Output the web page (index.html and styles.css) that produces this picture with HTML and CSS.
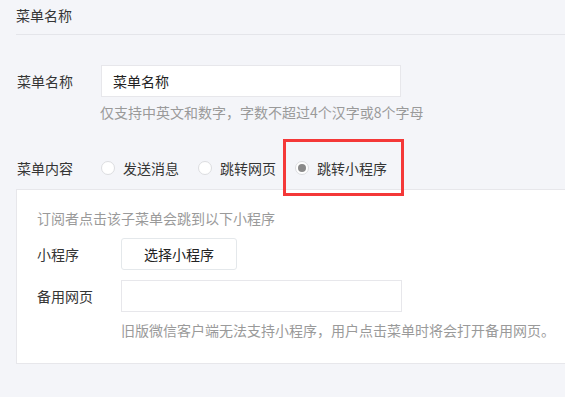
FILE: index.html
```html
<!DOCTYPE html>
<html lang="zh-CN">
<head>
    <meta charset="UTF-8">
    <meta name="viewport" content="width=device-width, initial-scale=1.0">
    <title>菜单设置</title>
    <link rel="stylesheet" href="styles.css">
</head>
<body>
    <div class="page">
        <div class="page-title">菜单名称</div>

        <div class="form-row name-row">
            <label class="form-label">菜单名称</label>
            <div class="form-field">
                <input class="text-input name-input" type="text" value="菜单名称">
            </div>
        </div>
        <div class="form-tip name-tip">仅支持中英文和数字，字数不超过4个汉字或8个字母</div>

        <div class="form-row content-row">
            <label class="form-label">菜单内容</label>
            <div class="radio-group">
                <span class="radio-item"><i class="radio"></i>发送消息</span>
                <span class="radio-item"><i class="radio"></i>跳转网页</span>
                <span class="radio-item marked"><i class="radio checked"></i>跳转小程序</span>
            </div>
        </div>

        <div class="panel">
            <div class="panel-desc">订阅者点击该子菜单会跳到以下小程序</div>
            <div class="form-row panel-row">
                <label class="form-label panel-label">小程序</label>
                <button class="btn">选择小程序</button>
            </div>
            <div class="form-row panel-row">
                <label class="form-label panel-label">备用网页</label>
                <input class="text-input url-input" type="text">
            </div>
            <div class="form-tip panel-tip">旧版微信客户端无法支持小程序，用户点击菜单时将会打开备用网页。</div>
        </div>
    </div>
</body>
</html>
```

FILE: styles.css
```css
body {
    margin: 0;
    padding: 0;
    background-color: #f4f5f9;
    color: #353535;
    font-family: "Noto Sans CJK SC", "Noto Sans", sans-serif;
    font-size: 14px;
    overflow: hidden;
}
.page {
    padding-left: 16px;
}
.page-title {
    height: 35px;
    line-height: 30px;
    border-bottom: 1px solid #e4e5ea;
    box-sizing: border-box;
}
.form-row {
    display: flex;
    align-items: center;
    height: 32px;
}
.form-label {
    width: 84px;
    flex-shrink: 0;
    padding-left: 1px;
}
.name-row {
    margin-top: 30px;
}
.text-input {
    box-sizing: border-box;
    height: 32px;
    border: 1px solid #e7e7eb;
    background: #fff;
    font-family: inherit;
    font-size: 14px;
    color: #222;
    padding: 0 11px;
    margin: 0;
    outline: none;
}
.name-input {
    width: 300px;
}
.form-tip {
    color: #9a9a9a;
    line-height: 20px;
    white-space: nowrap;
}
.name-tip {
    margin-top: 5px;
    padding-left: 84px;
}
.content-row {
    margin-top: 30px;
}
.radio-group {
    display: flex;
    align-items: center;
}
.radio-item {
    display: flex;
    align-items: center;
    margin-right: 19px;
    position: relative;
}
.radio {
    display: inline-block;
    box-sizing: border-box;
    width: 14px;
    height: 14px;
    border: 1px solid #dcdde0;
    border-radius: 50%;
    background: #fff;
    margin-right: 8px;
    position: relative;
}
.radio.checked::after {
    content: "";
    position: absolute;
    left: 2px;
    top: 2px;
    width: 8px;
    height: 8px;
    border-radius: 50%;
    background: #8a8a8a;
}
/* red annotation box over the selected option */
.marked::before {
    content: "";
    position: absolute;
    left: -12px;
    right: -17px;
    top: -19px;
    bottom: -18px;
    border: 3px solid #f43838;
}
.panel {
    margin-top: 5px;
    margin-right: -10px;
    background: #fff;
    border: 1px solid #e7e7eb;
    padding: 18px 20px 23px 20px;
}
.panel-desc {
    color: #9a9a9a;
    line-height: 20px;
}
.panel-row {
    margin-top: 10px;
}
.panel-label {
    width: 84px;
    padding-left: 0;
}
.btn {
    width: 116px;
    height: 32px;
    background: #fff;
    border: 1px solid #e4e8eb;
    border-radius: 3px;
    font-family: inherit;
    font-size: 14px;
    color: #222;
    padding: 0;
    cursor: pointer;
}
.url-input {
    width: 281px;
}
.panel-tip {
    margin-top: 8px;
    padding-left: 84px;
}
```
